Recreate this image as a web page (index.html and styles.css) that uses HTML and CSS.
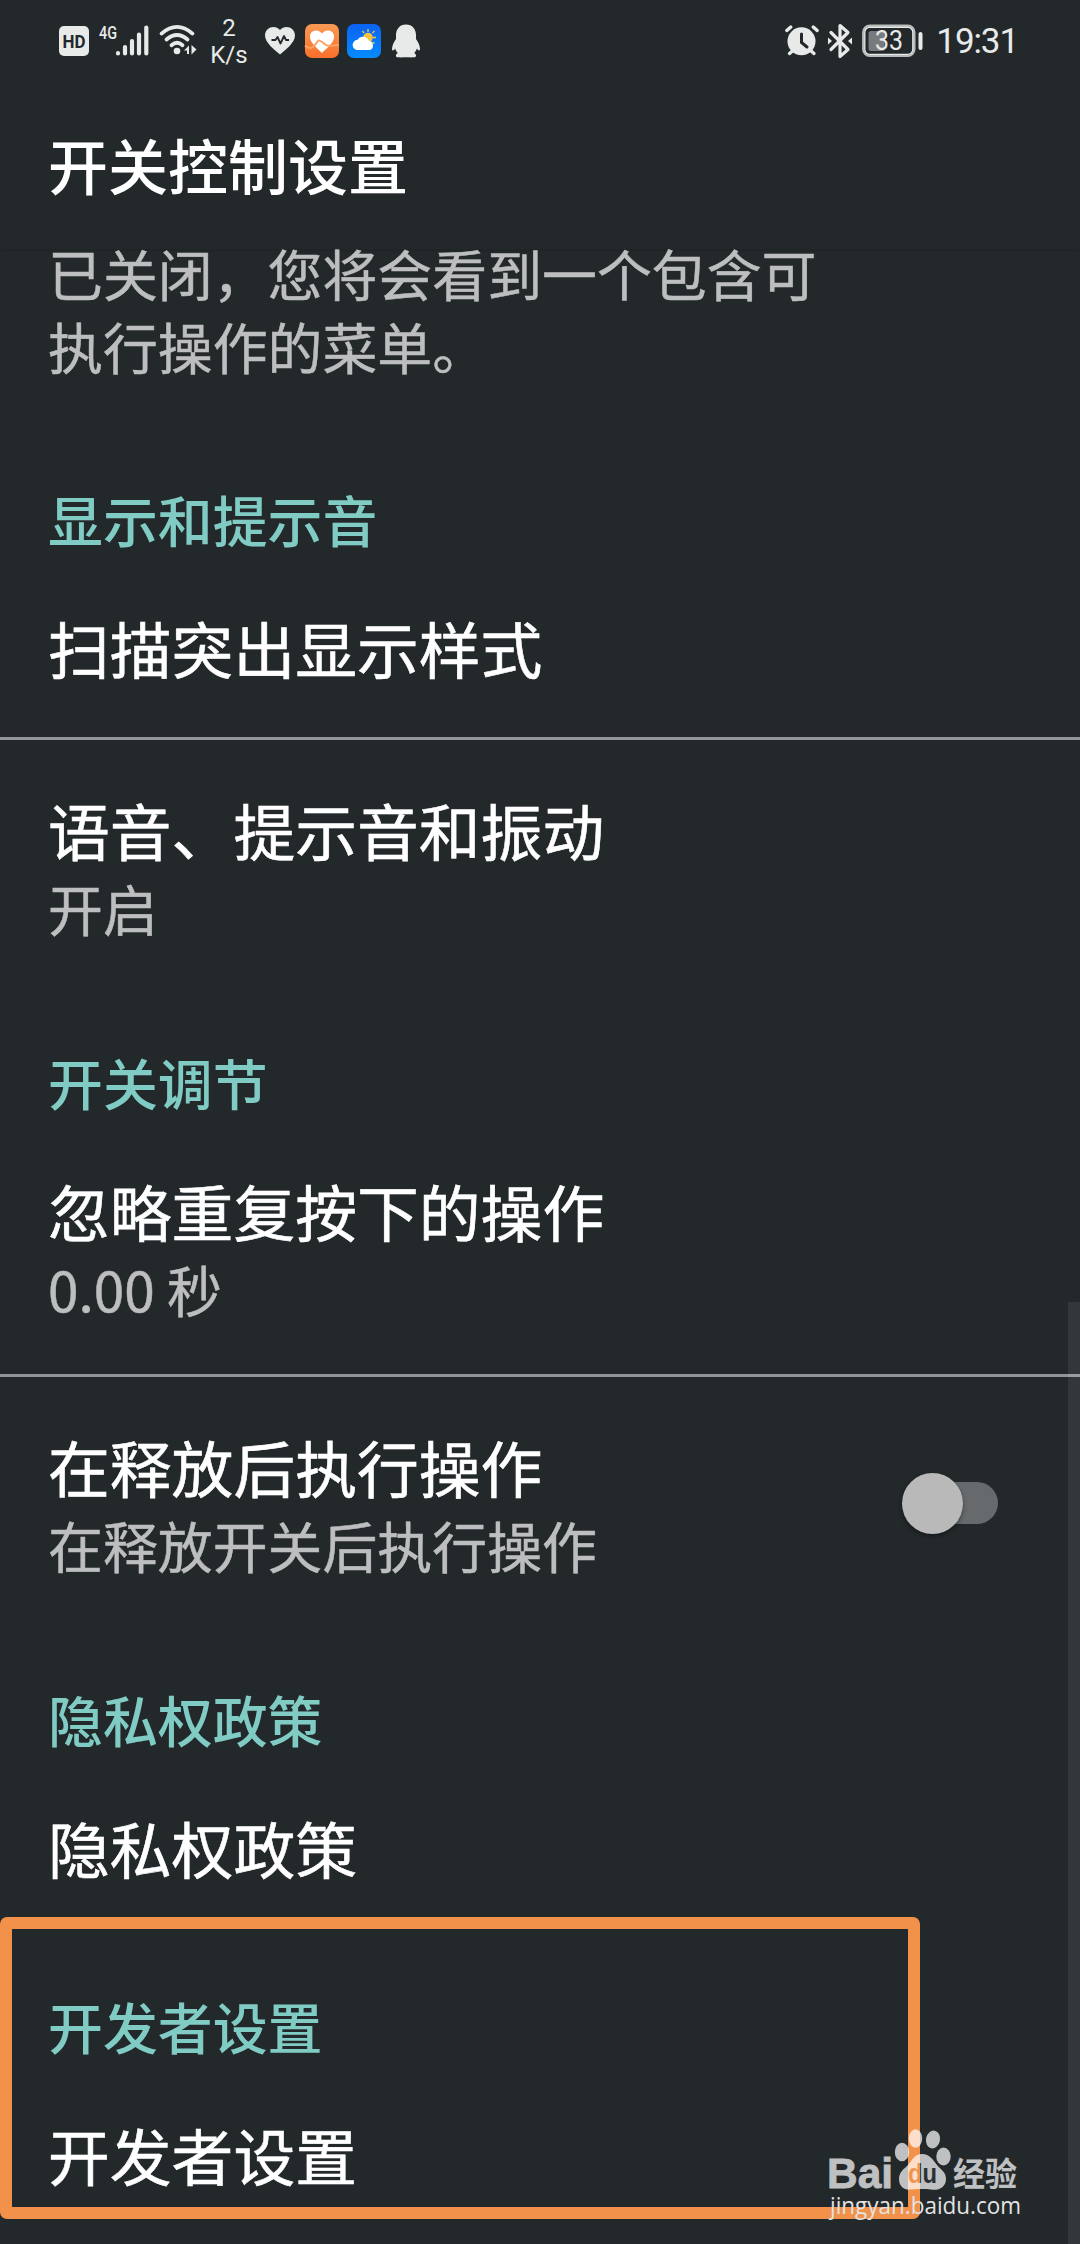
FILE: index.html
```html
<!DOCTYPE html>
<html lang="zh-CN">
<head>
<meta charset="utf-8">
<title>开关控制设置</title>
<link rel="stylesheet" href="styles.css">
</head>
<body>
<div class="screen">
  <header class="top">
    <div class="status">
      <div class="status-left">
        <svg class="hd" width="30" height="30" viewBox="0 0 30 30"><rect width="30" height="30" rx="5" fill="#e8eae9"/><text x="3.5" y="21.8" textLength="23" lengthAdjust="spacingAndGlyphs" class="hd-text">HD</text></svg>
        <svg class="signal" width="52" height="34" viewBox="0 0 52 34"><text x="1" y="15" textLength="18" lengthAdjust="spacingAndGlyphs" class="net-text">4G</text><g stroke="#e8eae9" stroke-width="4.2" stroke-linecap="round"><path d="M20 29.2v.2M27 23v6.4M34 17v12.4M41 10.500v18.900M48.300 3.600v25.800"/></g></svg>
        <svg class="wifi" width="38" height="34" viewBox="0 0 38 34"><g fill="none" stroke="#e8eae9" stroke-width="3.800" stroke-linecap="round"><path d="M2.500 9.600Q18 -3.800 33.500 9.600"/><path d="M7.500 15.500Q18 6.500 28.500 15.500"/><path d="M12.500 21.200Q18 16.400 23.500 21.200"/></g><circle cx="18" cy="27" r="3.300" fill="#e8eae9"/><path d="M25 26.500l5-5v8.500h-2v-3.500zM37.500 25.500l-5-4.500v9.500z" fill="#e8eae9"/></svg>
        <div class="speed"><span>2</span><span>K/s</span></div>
        <svg class="heart" width="30" height="28" viewBox="0 0 30 28"><path d="M15 27.500C10 23 0 16 0 8.500C0 .5 10-3 15 3C20-3 30 .5 30 8.500C30 16 20 23 15 27.500z" fill="#e8eae9"/><path d="M6.500 13h4l2-3 3 6.500 3.500-7.500 2 4h3" fill="none" stroke="#22272b" stroke-width="1.800" stroke-linejoin="round"/></svg>
        <svg class="health" width="34" height="34" viewBox="0 0 34 34"><defs><linearGradient id="org" x2="0" y2="1"><stop stop-color="#f99a55"/><stop offset="1" stop-color="#f9702b"/></linearGradient></defs><rect width="34" height="34" rx="7" fill="url(#org)"/><path d="M17 29C12 24 5 19 5 12.800C5 6 13 4.500 17 9.500C21 4.500 29 6 29 12.800C29 19 22 24 17 29z" fill="#fff"/><path d="M0 21.500q3 3 6 2.500 3-1 6.500-6.500 1.500-2 4.500.5l4 3q2 1.500 13 0" fill="none" stroke="#fda166" stroke-width="2"/></svg>
        <svg class="weather" width="34" height="34" viewBox="0 0 34 34"><defs><linearGradient id="blu" x2="0" y2="1"><stop stop-color="#0b62f1"/><stop offset="1" stop-color="#058cff"/></linearGradient></defs><rect width="34" height="34" rx="7" fill="url(#blu)"/><path d="M21 5v3M15.500 7l1.500 2M27.500 7l-2 2M29 13.500h-3M25.500 18l2 1.500" stroke="#f5c647" stroke-width="1.300"/><circle cx="21" cy="13.500" r="4.800" fill="#f8c23c"/><path d="M11 26a5 5 0 0 1-.5-10.200 6.500 6.500 0 0 1 11.500 1A4.700 4.700 0 0 1 22.500 26z" fill="#fff"/></svg>
        <svg class="qq" width="28" height="34" viewBox="0 0 28 34"><path d="M14 .5C7.500.5 4 5.500 4 11v4C2 18 0 21.500 0 25c0 2 1.200 2 3.200-.6.5 2 1.400 3.300 2.600 4.500C3.500 30.200 3 33 6 33.300c3 .2 5 0 8 0 3 0 5 .2 8 0 3-.3 2.500-3.100.2-4.400 1.200-1.200 2.100-2.500 2.600-4.500 2 2.600 3.200 2.600 3.200.6 0-3.500-2-7-4-10v-4C24 5.500 20.500.5 14 .5z" fill="#e8eae9"/></svg>
      </div>
      <div class="status-right">
        <svg class="alarm" width="34" height="32" viewBox="0 0 34 32"><g stroke="#e8eae9" stroke-width="3.400" stroke-linecap="round"><path d="M1.800 5.500l4-3.500M32.200 5.500L28.200 2M4.500 28.500l4-3.500M29 28.500l-4-3.500"/></g><circle cx="16.500" cy="16.300" r="14" fill="#e8eae9"/><path d="M16.500 9v8.500l5.500 4.500" fill="none" stroke="#22272b" stroke-width="3" stroke-linecap="round"/></svg>
        <svg class="bt" width="24" height="36" viewBox="0 0 24 36"><path d="M3 9.500L20 26.500 12 33.500V2.500L20 9.500 3 26.500" fill="none" stroke="#e8eae9" stroke-width="3.200" stroke-linejoin="round" stroke-linecap="round"/><path d="M0 14.500v7l4-3.500zM24 14.500v7L20 18z" fill="#e8eae9"/></svg>
        <svg class="battery" width="62" height="34" viewBox="0 0 62 34"><rect x="1.300" y="1.800" width="51" height="30" rx="6.500" fill="none" stroke="#b9bcbc" stroke-width="2.400"/><rect x="2.800" y="3.300" width="48" height="27" rx="5" fill="none" stroke="#e8eae9" stroke-width="1.300"/><rect x="6.500" y="7" width="16" height="20" rx="2.500" fill="#787b7d"/><rect x="56.500" y="8" width="4" height="18" rx="2" fill="#e8eae9"/><text x="13" y="26" textLength="28" lengthAdjust="spacingAndGlyphs" class="bat-text">33</text></svg>
        <span class="time">19:31</span>
      </div>
    </div>
    <h1 class="app-title">开关控制设置</h1>
  </header>

  <main class="list">
    <p class="summary lead">已关闭，您将会看到一个包含可<br>执行操作的菜单。</p>

    <h2 class="section">显示和提示音</h2>
    <div class="row divided"><div class="title">扫描突出显示样式</div></div>
    <div class="row"><div class="title">语音、提示音和振动</div><div class="summary">开启</div></div>

    <h2 class="section">开关调节</h2>
    <div class="row divided"><div class="title">忽略重复按下的操作</div><div class="summary">0.00 秒</div></div>
    <div class="row with-switch">
      <div><div class="title">在释放后执行操作</div><div class="summary">在释放开关后执行操作</div></div>
      <div class="switch"><span class="thumb"></span></div>
    </div>

    <h2 class="section">隐私权政策</h2>
    <div class="row"><div class="title">隐私权政策</div></div>

    <h2 class="section">开发者设置</h2>
    <div class="row"><div class="title">开发者设置</div></div>
  </main>

  <div class="scrollbar"></div>
  <div class="highlight"></div>
  <svg class="watermark" width="200" height="96" viewBox="0 0 200 96">
    <defs><linearGradient id="du" gradientUnits="userSpaceOnUse" x1="80" x2="120" y1="0" y2="0"><stop offset=".3" stop-color="#ef9450"/><stop offset=".3" stop-color="#2b3033"/></linearGradient></defs>
    <g fill="#fff" opacity=".71">
      <text x="-1" y="61" textLength="66" lengthAdjust="spacingAndGlyphs" class="wm-bai">Bai</text>
      <ellipse cx="74" cy="25" rx="7.200" ry="9.200"/><ellipse cx="87.500" cy="11.500" rx="6.700" ry="9.200"/><ellipse cx="105" cy="12.500" rx="7" ry="9" transform="rotate(12 105 12.500)"/><ellipse cx="115.500" cy="29.500" rx="7.200" ry="9"/>
      <path d="M94 27c-8 0-9.500 6-14 11-4 4-9 7-9 14 0 8 6 11.500 12 10.500 5-.8 15-.8 20 0 7 1.500 15-2 15-10.500 0-7-5-9-9-14s-7-11-15-11z"/>
      <text x="125" y="59" textLength="64" lengthAdjust="spacingAndGlyphs" class="wm-exp">经验</text>
    </g>
    <text x="80" y="56" textLength="29" lengthAdjust="spacingAndGlyphs" class="wm-du" fill="url(#du)">du</text>
    <text x="2" y="87" textLength="191" lengthAdjust="spacingAndGlyphs" class="wm-url">jingyan.baidu.com</text>
  </svg>
</div>
</body>
</html>
```
FILE: styles.css
```css
* { box-sizing: border-box; }
body {
  margin: 0;
  background: #23282b;
  color: #fff;
  font-family: "Noto Sans CJK SC", sans-serif;
}
.screen {
  position: relative;
  width: 1080px;
  height: 2244px;
  overflow: hidden;
  display: flex;
  flex-direction: column;
}
.top {
  flex: none;
  height: 249px;
  background: #23282b;
  box-shadow: 0 1px 3px rgba(0, 0, 0, .15);
}
.status {
  height: 82px;
  display: flex;
  justify-content: space-between;
  padding: 0 62px 0 59px;
  color: #e8eae9;
}
.status-left, .status-right { display: flex; align-items: center; }
.status svg { display: block; flex: none; overflow: visible; }
.signal { margin-left: 9px; }
.wifi { margin-left: 9px; }
.speed {
  width: 40px;
  margin: 1px 0 0 12px;
  display: flex;
  flex-direction: column;
  text-align: center;
  font: 24px/26.500px Roboto, sans-serif;
}
.heart { margin-left: 16px; }
.health { margin-left: 10px; }
.weather { margin-left: 8px; }
.qq { margin-left: 11px; }
.bt { margin-left: 9px; }
.battery { margin-left: 10px; }
.time {
  margin: 2px 0 0 12px;
  font: 35px/40px Roboto, sans-serif;
  letter-spacing: -1.100px;
}
.hd-text { font: 700 19px Roboto, sans-serif; fill: #22272b; }
.net-text { font: 500 19px Roboto, sans-serif; fill: #e8eae9; }
.bat-text { font: 27px Roboto, sans-serif; fill: #e8eae9; }
.app-title {
  margin: 0;
  padding: 38px 48px 0;
  font-size: 60px;
  line-height: 88px;
  font-weight: 500;
}
.list {
  flex: 1;
  min-height: 0;
  overflow: hidden;
}
.lead { margin: -13px 0 48px; padding: 0 48px; }
.section {
  margin: 0;
  height: 128px;
  padding: 52px 48px 3px;
  font-size: 54.900px;
  line-height: 73px;
  font-weight: 500;
  color: #80cbc4;
}
.row { padding: 48px 48px 49px; }
.divided { border-bottom: 3px solid #929698; }
.title {
  font-size: 61.800px;
  line-height: 82px;
  -webkit-text-stroke: .6px currentColor;
}
.summary {
  font-size: 54.900px;
  line-height: 73px;
  color: #bdbebf;
  -webkit-text-stroke: .5px currentColor;
}
.title + .summary { margin-top: 1px; }
.with-switch {
  display: flex;
  justify-content: space-between;
  align-items: center;
  padding-right: 82px;
}
.switch {
  width: 90px;
  height: 42px;
  border-radius: 21px;
  background: #666a6c;
  display: flex;
  align-items: center;
}
.thumb {
  flex: none;
  width: 61px;
  height: 61px;
  margin-left: -6px;
  border-radius: 50%;
  background: #b9b9b9;
  box-shadow: 0 2px 4px rgba(0, 0, 0, .4);
}
.scrollbar {
  position: absolute;
  right: 0;
  top: 1302px;
  bottom: 0;
  width: 12px;
  background: rgba(255, 255, 255, .07);
}
.highlight {
  position: absolute;
  left: 0;
  top: 1916.500px;
  width: 919.500px;
  height: 302px;
  border: 12px solid #f29149;
  border-radius: 7px;
}
.watermark {
  position: absolute;
  left: 828px;
  top: 2127px;
  overflow: visible;
}
.wm-bai { font: 700 43px "Liberation Sans", sans-serif; stroke: #fff; stroke-width: .8px; }
.wm-exp { font: 700 33px "Noto Sans CJK SC", sans-serif; }
.wm-du { font: 700 27px "Liberation Sans", sans-serif; }
.wm-url { font: 24px "Open Sans", sans-serif; fill: #e2e3e3; }
```
